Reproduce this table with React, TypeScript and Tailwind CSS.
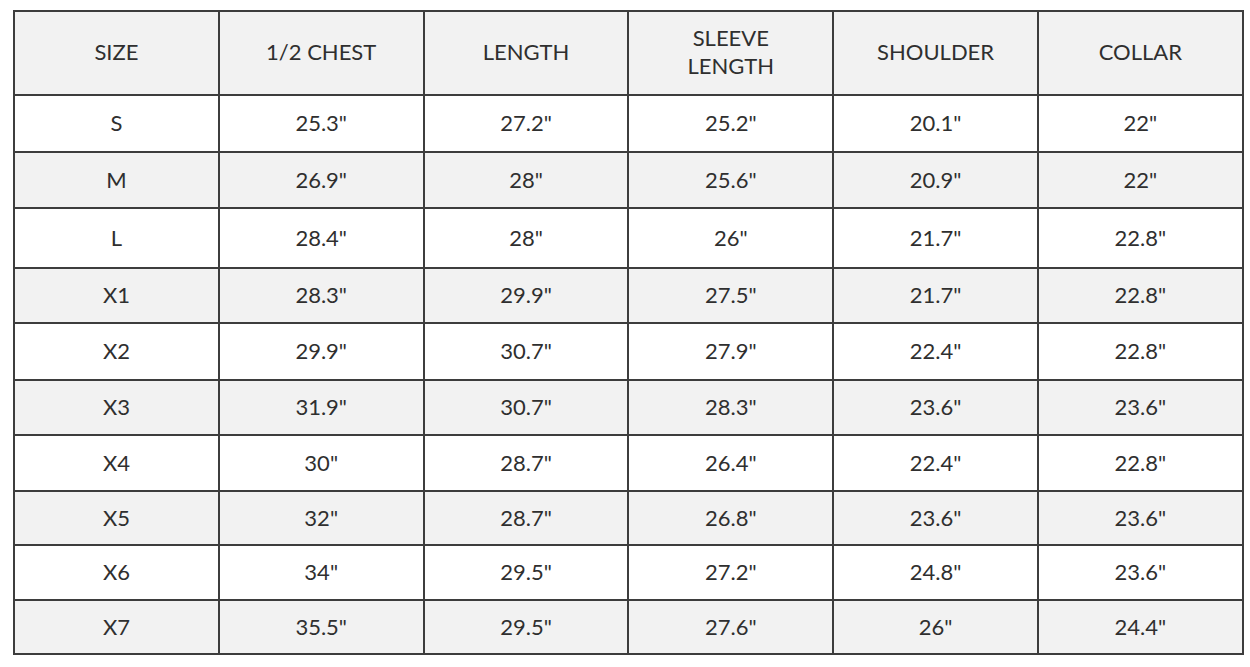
import React from 'react';

const headers: React.ReactNode[] = [
  'SIZE',
  '1/2 CHEST',
  'LENGTH',
  <>
    SLEEVE
    <br />
    LENGTH
  </>,
  'SHOULDER',
  'COLLAR',
];

const rows: { h: string; cells: string[] }[] = [
  { h: 'h-[57px]', cells: ['S', '25.3"', '27.2"', '25.2"', '20.1"', '22"'] },
  { h: 'h-[56px]', cells: ['M', '26.9"', '28"', '25.6"', '20.9"', '22"'] },
  { h: 'h-[60px]', cells: ['L', '28.4"', '28"', '26"', '21.7"', '22.8"'] },
  { h: 'h-[55px]', cells: ['X1', '28.3"', '29.9"', '27.5"', '21.7"', '22.8"'] },
  { h: 'h-[57px]', cells: ['X2', '29.9"', '30.7"', '27.9"', '22.4"', '22.8"'] },
  { h: 'h-[55px]', cells: ['X3', '31.9"', '30.7"', '28.3"', '23.6"', '23.6"'] },
  { h: 'h-[56px]', cells: ['X4', '30"', '28.7"', '26.4"', '22.4"', '22.8"'] },
  { h: 'h-[54px]', cells: ['X5', '32"', '28.7"', '26.8"', '23.6"', '23.6"'] },
  { h: 'h-[55px]', cells: ['X6', '34"', '29.5"', '27.2"', '24.8"', '23.6"'] },
  { h: 'h-[54px]', cells: ['X7', '35.5"', '29.5"', '27.6"', '26"', '24.4"'] },
];

export default function App() {
  return (
    <div className="w-[1250px] h-[667px] bg-white pt-[10px] pl-[13px] font-['Lato','Open_Sans',sans-serif] text-[#2f2f2f]">
      <table className="table-fixed border-collapse w-[1229px] border-2 border-[#3d3d3d]">
        <colgroup>
          {headers.map((_, i) => (
            <col key={i} className="w-[204.8px]" />
          ))}
        </colgroup>
        <thead>
          <tr className="h-[84px] bg-[#f2f2f2]">
            {headers.map((t, i) => (
              <th
                key={i}
                className="border-2 border-[#3d3d3d] font-normal text-[22px] leading-[28px] text-center whitespace-nowrap px-2 pb-[2px]"
              >
                {t}
              </th>
            ))}
          </tr>
        </thead>
        <tbody>
          {rows.map((r, i) => (
            <tr key={r.cells[0]} className={`${r.h} ${i % 2 === 1 ? 'bg-[#f2f2f2]' : 'bg-white'}`}>
              {r.cells.map((c, j) => (
                <td key={j} className="border-2 border-[#3d3d3d] text-[22px] text-center p-0 pb-[2px]">
                  {c}
                </td>
              ))}
            </tr>
          ))}
        </tbody>
      </table>
    </div>
  );
}
